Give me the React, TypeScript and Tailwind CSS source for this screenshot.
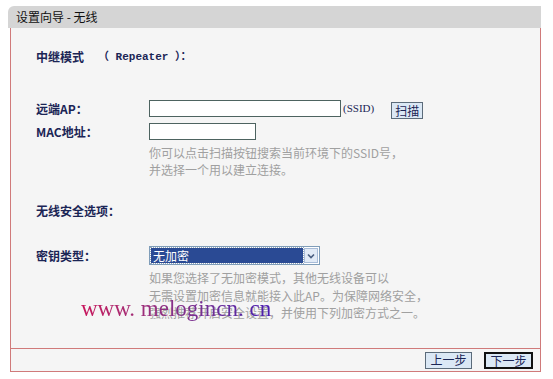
const cn = { fontFamily: '"SimSun", "Noto Sans CJK SC", "Liberation Sans", sans-serif' };

function Label({ children }: { children: React.ReactNode }) {
  return (
    <div className="w-[113px] shrink-0 text-[12px] font-bold text-[#1b2555]" style={cn}>
      {children}
    </div>
  );
}

function Btn({ children, dark, w }: { children: React.ReactNode; dark?: boolean; w: string }) {
  return (
    <button
      className={`${w} h-[17px] bg-[#dbe8f5] text-[12px] leading-[14px] text-[#1b2555] ${
        dark ? 'border-2 border-[#111]' : 'border border-[#5b6b7a]'
      }`}
      style={cn}
    >
      {children}
    </button>
  );
}

export default function App() {
  return (
    <div className="w-[553px] h-[379px] bg-white pt-[6px] pl-[8px] pr-[12px] pb-[7px]" style={cn}>
      <div className="h-[22px] bg-[#d5d5d5] rounded-tl-[6px] flex items-center pl-[8px] text-[12px] text-[#111]">
        设置向导 - 无线
      </div>
      <div className="relative ml-[2px] border-x border-b border-[#d07a7a] bg-[#f5f5f5] h-[344px] flex flex-col">
        <div className="flex-1 pl-[25px] pt-[20px]">
          <div className="flex items-center h-[18px] text-[12px] font-bold text-[#1b2555]">
            <span className="w-[62px]">中继模式</span>
            <span style={{ fontFamily: '"Liberation Mono", "Noto Sans CJK SC", monospace' }} className="text-[11px]">
              （ Repeater ）：
            </span>
          </div>

          <div className="mt-[34px] flex items-center h-[17px]">
            <Label>远端AP：</Label>
            <div className="w-[192px] h-[17px] border border-[#4d6360] bg-white" />
            <span className="ml-[2px] text-[11px] text-[#1b2555]" style={{ fontFamily: '"Liberation Serif", serif' }}>
              (SSID)
            </span>
            <div className="ml-[17px]">
              <Btn w="w-[32px]">扫描</Btn>
            </div>
          </div>

          <div className="mt-[6px] flex items-center h-[17px]">
            <Label>MAC地址：</Label>
            <div className="w-[107px] h-[17px] border border-[#4d6360] bg-white" />
          </div>

          <div className="ml-[113px] mt-[4px] text-[12px] leading-[17px] text-[#a0a0a0]">
            <div>你可以点击扫描按钮搜索当前环境下的SSID号，</div>
            <div>并选择一个用以建立连接。</div>
          </div>

          <div className="mt-[24px]">
            <Label>无线安全选项：</Label>
          </div>

          <div className="mt-[26px] flex items-center h-[19px]">
            <Label>密钥类型：</Label>
            <div className="w-[171px] h-[19px] border border-[#7f9db9] bg-white flex items-center p-[1px]">
              <div className="flex-1 h-full bg-[#2a4a94] text-white text-[12px] leading-[15px] pl-[2px] outline-1 outline-dotted outline-[#9ab]">
                无加密
              </div>
              <div className="w-[14px] h-full ml-[1px] bg-[#e1eaf6] border border-[#a8bcd8] flex items-center justify-center">
                <svg width="8" height="6" viewBox="0 0 8 6">
                  <path d="M1 1.5 L4 4.5 L7 1.5" stroke="#4a5f82" strokeWidth="1.6" fill="none" />
                </svg>
              </div>
            </div>
          </div>

          <div className="ml-[113px] mt-[4px] text-[12px] leading-[17.5px] text-[#a0a0a0]">
            <div>如果您选择了无加密模式，其他无线设备可以</div>
            <div>无需设置加密信息就能接入此AP。为保障网络安全，</div>
            <div>强烈推荐开启安全设置，并使用下列加密方式之一。</div>
          </div>
        </div>

        <div
          className="absolute left-[70px] top-[267px] text-[23px] leading-[28px] whitespace-pre bg-gradient-to-r from-[#c8105a] to-[#4a1ab0] bg-clip-text text-transparent"
          style={{ fontFamily: '"Liberation Serif", "DejaVu Serif", serif' }}
        >
          www. melogincn. cn
        </div>

        <div className="h-[23px] border-t border-[#d07a7a] flex items-center justify-end gap-[12px] pr-[7px]">
          <Btn w="w-[47px]">上一步</Btn>
          <Btn dark w="w-[49px]">下一步</Btn>
        </div>
      </div>
    </div>
  );
}
